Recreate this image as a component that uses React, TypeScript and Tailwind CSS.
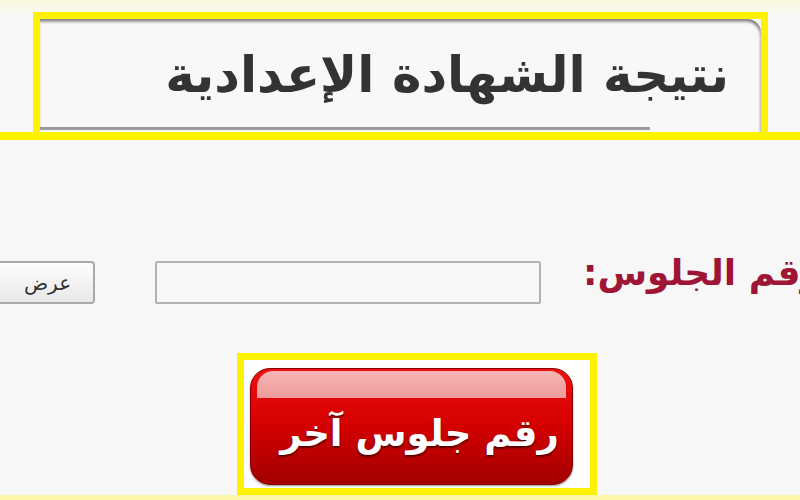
import React from 'react';

const arabic = { fontFamily: '"DejaVu Sans", sans-serif' };

function TitlePanel() {
  return (
    <div className="ml-[33px] w-[735px] h-[120px] border-[7px] border-b-0 border-[#fff200] bg-[#f7f7f7]">
      <div className="relative h-full rounded-tr-[14px] bg-[#f8f8f8] shadow-[inset_0_4px_3px_-1px_rgba(0,0,0,0.35),inset_-3px_3px_3px_-2px_rgba(0,0,0,0.25)]">
        <div className="flex h-[108px] items-center justify-end pr-[32px] pt-[4px]">
          <h1 dir="rtl" style={arabic} className="text-[50px] font-bold leading-none text-[#333333]">
            نتيجة الشهادة الإعدادية
          </h1>
        </div>
        <div className="h-[3px] w-[610px] bg-[#9a9a9a]" />
      </div>
    </div>
  );
}

function SeatForm() {
  return (
    <div className="-ml-[20px] mt-[121px] flex h-[43px] w-[880px] items-start">
      <button
        style={arabic}
        className="h-[43px] w-[115px] shrink-0 rounded-[4px] border-2 border-[#a9a9a9] bg-gradient-to-b from-[#fdfdfd] to-[#e9e9e9] pl-[20px] text-[20px] text-[#333]"
      >
        عرض
      </button>
      <input
        type="text"
        className="ml-[60px] h-[43px] w-[386px] shrink-0 rounded-[2px] border-2 border-[#b3b3b3] bg-[#f8f8f8] outline-none"
      />
      <span
        dir="rtl"
        style={arabic}
        className="-mt-[12px] ml-[42px] shrink-0 whitespace-nowrap text-[36px] font-bold leading-[48px] text-[#9e1535]"
      >
        رقم الجلوس:
      </span>
    </div>
  );
}

function AnotherSeatButton() {
  return (
    <div className="ml-[237px] mt-[49px] h-[142px] w-[360px] border-[7px] border-[#fff200] bg-white pl-[6px] pt-[8px]">
      <button className="relative h-[117px] w-[323px] overflow-hidden rounded-[20px] border border-[#8a0000] bg-gradient-to-b from-[#ee1010] via-[#d40000] to-[#a30000] shadow-[0_1px_2px_rgba(0,0,0,0.4)]">
        <div className="absolute inset-x-[6px] top-[2px] h-[27px] rounded-t-[16px] bg-gradient-to-b from-[#f5b5b5] to-[#ef9a9a]" />
        <span
          dir="rtl"
          style={arabic}
          className="relative block pl-[16px] pt-[14px] text-[37px] font-bold leading-none text-white [text-shadow:0_2px_2px_rgba(60,0,0,0.8)]"
        >
          رقم جلوس آخر
        </span>
      </button>
    </div>
  );
}

export default function App() {
  return (
    <div className="relative h-[500px] w-[800px] overflow-hidden bg-[#f7f7f7]">
      <div className="h-[12px] bg-gradient-to-b from-[#fcf9de] to-[#f9f8ee]" />
      <TitlePanel />
      <div className="h-[8px] bg-[#fff200]" />
      <SeatForm />
      <AnotherSeatButton />
      <div className="h-[5px] bg-[#fbf7a8]" />
    </div>
  );
}
